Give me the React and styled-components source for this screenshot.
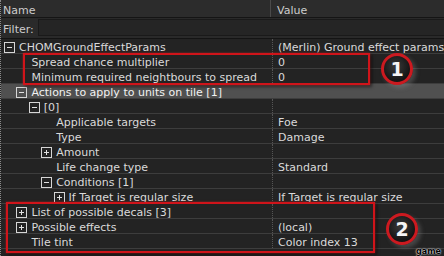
import React from "react";
import styled, { createGlobalStyle } from "styled-components";

const GlobalStyle = createGlobalStyle`
  html, body {
    margin: 0;
    padding: 0;
    background: #1f1f1f;
  }
`;

const Panel = styled.div`
  position: relative;
  width: 444px;
  height: 256px;
  overflow: hidden;
  background: #222222;
  border-left: 1px dotted #8a8a8a;
  box-sizing: border-box;
  font-family: "DejaVu Sans", Verdana, sans-serif;
  font-size: 11px;
  color: #dadada;
`;

const Header = styled.div`
  display: grid;
  grid-template-columns: 270px 1fr;
  height: 18px;
  background: #2c2c2c;
  border-bottom: 1px solid #151515;
  box-sizing: border-box;
`;

const HeaderCell = styled.div`
  display: flex;
  align-items: center;
  padding: 3px 0 0 ${(p) => p.pad}px;
  color: #cccccc;
  border-right: ${(p) => (p.divider ? "1px solid #4a4a4a" : "none")};
`;

const FilterBar = styled.div`
  display: flex;
  align-items: center;
  gap: 4px;
  height: 21px;
  padding: 1px 0 2px 2px;
  box-sizing: border-box;
  background: #2a2a2a;
  border-bottom: 1px solid #141414;
  color: #cccccc;
`;

const FilterLabel = styled.span`
  padding-top: 3px;
`;

const FilterInput = styled.div`
  flex: 1;
  align-self: stretch;
  background: #252525;
  border: 1px solid #1a1a1a;
  border-right: none;
`;

const Tree = styled.div`
  display: flex;
  flex-direction: column;
`;

const Row = styled.div`
  display: grid;
  grid-template-columns: 271px 1fr;
  height: 15px;
  box-sizing: border-box;
  border-bottom: 1px solid #3d3d3d;
  background: ${(p) => (p.selected ? "#505050" : "#232323")};
  color: ${(p) => (p.selected ? "#f2f2f2" : "#dadada")};
  line-height: 13px;
  white-space: nowrap;
`;

const NameCell = styled.div`
  display: flex;
  align-items: flex-start;
  padding: 2px 0 0 ${(p) => 18 + p.level * 12.4 - 15}px;
  overflow: hidden;
`;

const Label = styled.span`
  margin-left: ${(p) => (p.toggle ? 4 : 15)}px;
`;

const ValueCell = styled.div`
  padding: 2px 0 0 5px;
  border-left: ${(p) => (p.selected ? "none" : "1px dotted #555")};
  overflow: hidden;
`;

const Toggle = styled.span`
  position: relative;
  width: 9px;
  height: 9px;
  margin-top: 1px;
  border: 1px solid #d6d6d6;
  box-sizing: content-box;
  flex: none;

  &::before {
    content: "";
    position: absolute;
    left: 2px;
    right: 2px;
    top: 4px;
    height: 1px;
    background: #e2e2e2;
  }

  &::after {
    content: "";
    display: ${(p) => (p.open ? "none" : "block")};
    position: absolute;
    top: 2px;
    bottom: 2px;
    left: 4px;
    width: 1px;
    background: #e2e2e2;
  }
`;

const Callout = styled.div`
  position: absolute;
  left: ${(p) => p.x}px;
  top: ${(p) => p.y}px;
  width: ${(p) => p.w}px;
  height: ${(p) => p.h}px;
  border: 2px solid #d0141a;
  box-sizing: border-box;
  box-shadow: 0 0 2px rgba(255, 40, 40, 0.5), 2px 2px 3px rgba(0, 0, 0, 0.5);
  pointer-events: none;
`;

const Badge = styled.div`
  position: absolute;
  left: ${(p) => p.x - 16}px;
  top: ${(p) => p.y - 16}px;
  width: 32px;
  height: 32px;
  border-radius: 50%;
  border: 3px solid #cc1a20;
  box-sizing: border-box;
  background: radial-gradient(circle at 45% 40%, #3a3a3a, #141414 70%);
  box-shadow: 3px 3px 4px rgba(140, 140, 140, 0.35);
  display: flex;
  align-items: center;
  justify-content: center;
  font-family: "DejaVu Sans", Verdana, sans-serif;
  font-weight: bold;
  font-size: 19px;
  color: #f5f5f5;
`;

const Watermark = styled.div`
  position: absolute;
  right: 3px;
  bottom: 0px;
  font-family: "DejaVu Sans", Verdana, sans-serif;
  font-weight: bold;
  font-size: 8px;
  color: #000;
  text-shadow: 0 0 2px #fff, 0 0 1px #fff;
`;

const rows = [
  { level: 0, toggle: "open", name: "CHOMGroundEffectParams", value: "(Merlin) Ground effect params" },
  { level: 1, name: "Spread chance multiplier", value: "0" },
  { level: 1, name: "Minimum required neightbours to spread", value: "0" },
  { level: 1, toggle: "open", name: "Actions to apply to units on tile [1]", value: "", selected: true },
  { level: 2, toggle: "open", name: "[0]", value: "" },
  { level: 3, name: "Applicable targets", value: "Foe" },
  { level: 3, name: "Type", value: "Damage" },
  { level: 3, toggle: "closed", name: "Amount", value: "" },
  { level: 3, name: "Life change type", value: "Standard" },
  { level: 3, toggle: "open", name: "Conditions [1]", value: "" },
  { level: 4, toggle: "closed", name: "If Target is regular size", value: "If Target is regular size" },
  { level: 1, toggle: "closed", name: "List of possible decals [3]", value: "" },
  { level: 1, toggle: "closed", name: "Possible effects", value: "(local)" },
  { level: 1, name: "Tile tint", value: "Color index 13" },
];

export default function App() {
  return (
    <>
      <GlobalStyle />
      <Panel>
        <Header>
          <HeaderCell pad={2} divider>Name</HeaderCell>
          <HeaderCell pad={6}>Value</HeaderCell>
        </Header>
        <FilterBar>
          <FilterLabel>Filter:</FilterLabel>
          <FilterInput />
        </FilterBar>
        <Tree>
          {rows.map((r, i) => (
            <Row key={i} selected={r.selected}>
              <NameCell level={r.level}>
                {r.toggle && <Toggle open={r.toggle === "open"} />}
                <Label toggle={!!r.toggle}>{r.name}</Label>
              </NameCell>
              <ValueCell selected={r.selected}>{r.value}</ValueCell>
            </Row>
          ))}
        </Tree>
        <Callout x={22} y={53} w={347} h={32} />
        <Callout x={5} y={202} w={369} h={51} />
        <Badge x={396} y={69}>1</Badge>
        <Badge x={401} y={229}>2</Badge>
        <Watermark>game</Watermark>
      </Panel>
    </>
  );
}
